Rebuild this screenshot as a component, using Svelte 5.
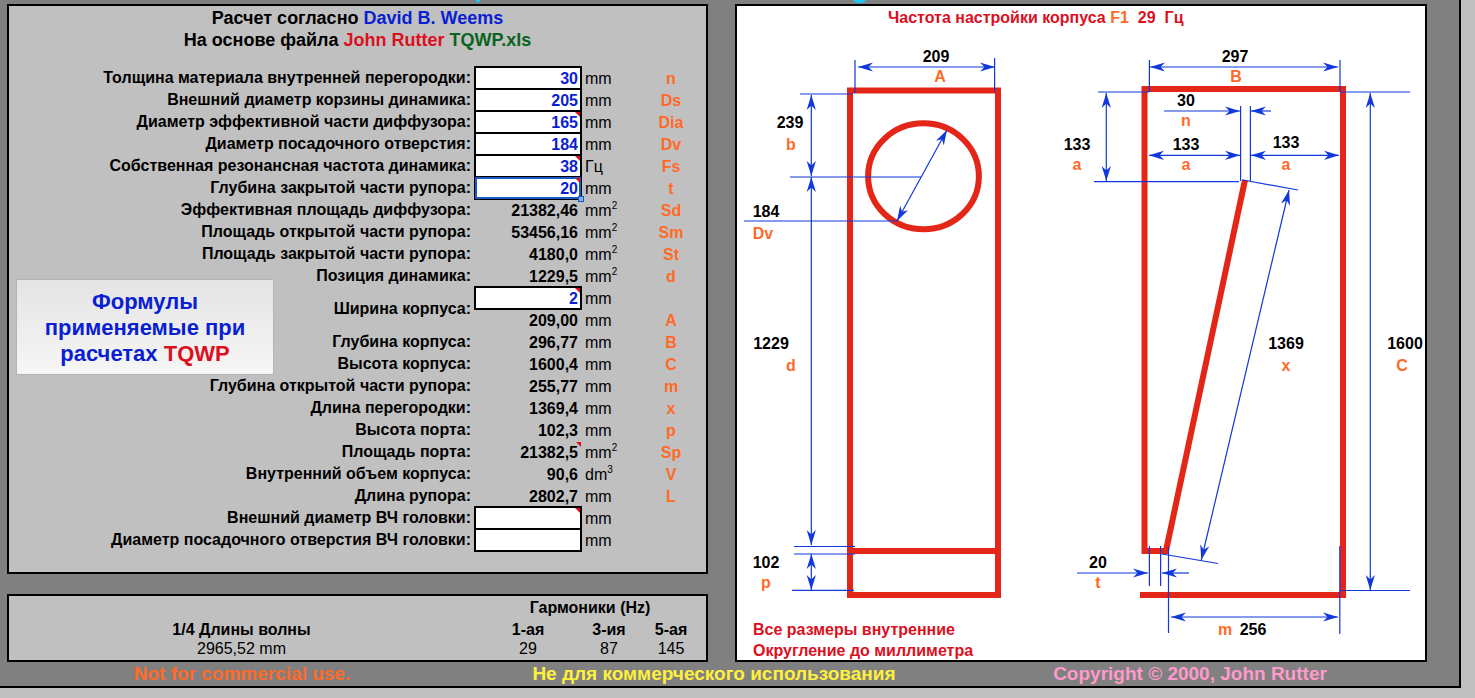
<script lang="ts">
  type Row = {
    id: string;
    label?: string;
    span?: number;
    value: string;
    unit: string;
    sup?: string;
    symbol?: string;
    input?: boolean;
    note?: boolean;
    selected?: boolean;
  };

  const rows: Row[] = $state([
    { id: 'n', label: 'Толщина материала внутренней перегородки:', value: '30', unit: 'mm', symbol: 'n', input: true },
    { id: 'ds', label: 'Внешний диаметр корзины динамика:', value: '205', unit: 'mm', symbol: 'Ds', input: true },
    { id: 'dia', label: 'Диаметр эффективной части диффузора:', value: '165', unit: 'mm', symbol: 'Dia', input: true, note: true },
    { id: 'dv', label: 'Диаметр посадочного отверстия:', value: '184', unit: 'mm', symbol: 'Dv', input: true },
    { id: 'fs', label: 'Собственная резонансная частота динамика:', value: '38', unit: 'Гц', symbol: 'Fs', input: true, note: true },
    { id: 't', label: 'Глубина закрытой части рупора:', value: '20', unit: 'mm', symbol: 't', input: true, note: true, selected: true },
    { id: 'sd', label: 'Эффективная площадь диффузора:', value: '21382,46', unit: 'mm', sup: '2', symbol: 'Sd' },
    { id: 'sm', label: 'Площадь открытой части рупора:', value: '53456,16', unit: 'mm', sup: '2', symbol: 'Sm' },
    { id: 'st', label: 'Площадь закрытой части рупора:', value: '4180,0', unit: 'mm', sup: '2', symbol: 'St' },
    { id: 'd', label: 'Позиция динамика:', value: '1229,5', unit: 'mm', sup: '2', symbol: 'd' },
    { id: 'width', label: 'Ширина корпуса:', span: 2, value: '2', unit: 'mm', input: true, note: true },
    { id: 'a', value: '209,00', unit: 'mm', symbol: 'A' },
    { id: 'b', label: 'Глубина корпуса:', value: '296,77', unit: 'mm', symbol: 'B' },
    { id: 'c', label: 'Высота корпуса:', value: '1600,4', unit: 'mm', symbol: 'C' },
    { id: 'm', label: 'Глубина открытой части рупора:', value: '255,77', unit: 'mm', symbol: 'm' },
    { id: 'x', label: 'Длина перегородки:', value: '1369,4', unit: 'mm', symbol: 'x' },
    { id: 'p', label: 'Высота порта:', value: '102,3', unit: 'mm', symbol: 'p' },
    { id: 'sp', label: 'Площадь порта:', value: '21382,5', unit: 'mm', sup: '2', symbol: 'Sp', note: true },
    { id: 'v', label: 'Внутренний объем корпуса:', value: '90,6', unit: 'dm', sup: '3', symbol: 'V' },
    { id: 'l', label: 'Длина рупора:', value: '2802,7', unit: 'mm', symbol: 'L' },
    { id: 'hf-outer', label: 'Внешний диаметр ВЧ головки:', value: '', unit: 'mm', input: true, note: true },
    { id: 'hf-hole', label: 'Диаметр посадочного отверстия ВЧ головки:', value: '', unit: 'mm', input: true },
  ]);

  // dimension lines with a head on both ends: x1, y1, x2, y2
  const spans = [
    [858, 67, 995, 67],
    [811.3, 95, 811.3, 176],
    [811.3, 177, 811.3, 545],
    [811.3, 554, 811.3, 590],
    [897, 221, 947, 130],
    [1150, 67, 1338, 67],
    [1106.3, 93, 1106.3, 181],
    [1149, 155.3, 1240, 155.3],
    [1251, 155.3, 1339, 155.3],
    [1289, 190, 1201.3, 560],
    [1370.3, 93, 1370.3, 590],
    [1171, 617, 1338, 617],
  ];

  // lines with a head on the second end only
  const pointers = [
    [1164, 111, 1240, 111],
    [1271, 111, 1251, 111],
    [1077, 573, 1148, 573],
    [1189, 573, 1162, 573],
  ];

  const guides = [
    [855, 60, 855, 93],
    [994.6, 58, 994.6, 92],
    [800, 94, 853, 94],
    [790, 177, 921, 177],
    [744, 221, 897, 221],
    [794, 546.5, 855, 546.5],
    [794, 554, 855, 554],
    [792, 590.4, 854, 590.4],
    [1149.4, 60, 1149.4, 92],
    [1340, 60, 1340, 92],
    [1098, 92, 1149, 92],
    [1340, 92, 1410, 92],
    [1094, 181.7, 1239, 181.7],
    [1240.6, 106, 1240.6, 181],
    [1250.4, 106, 1250.4, 181],
    [1243, 180, 1298, 190],
    [1162, 554, 1218, 563.5],
    [1149.4, 546, 1149.4, 586],
    [1160.6, 546, 1160.6, 586],
    [1168.5, 547, 1168.5, 633],
    [1339.8, 546, 1339.8, 634],
    [1340, 590.5, 1410, 590.5],
  ];

  const sizes: Array<[number, number, string]> = [
    [936, 62, '209'],
    [790, 128, '239'],
    [766, 217, '184'],
    [771, 349, '1229'],
    [766, 568, '102'],
    [1235, 62, '297'],
    [1186, 106, '30'],
    [1186, 150, '133'],
    [1286, 148, '133'],
    [1077, 150, '133'],
    [1286, 349, '1369'],
    [1405, 349, '1600'],
    [1098, 568, '20'],
    [1253, 635, '256'],
  ];

  const letters: Array<[number, number, string]> = [
    [940, 82, 'A'],
    [791, 150, 'b'],
    [763, 239, 'Dv'],
    [791, 371, 'd'],
    [766, 588, 'p'],
    [1236, 82, 'B'],
    [1186, 126, 'n'],
    [1186, 170, 'a'],
    [1286, 170, 'a'],
    [1077, 170, 'a'],
    [1286, 371, 'x'],
    [1402, 371, 'C'],
    [1098, 588, 't'],
    [1225, 635, 'm'],
  ];
</script>

<main class="sheet">
  <svg class="title-edge" viewBox="0 0 1459 4" preserveAspectRatio="none" aria-hidden="true">
    <path d="M476 0h4v2h-4zM853 0h13q-2 3-6.500 3t-6.500-3z" />
  </svg>

  <div class="panels">
    <div class="left">
      <section class="panel params">
        <h1>Расчет согласно <span class="blue">David B. Weems</span></h1>
        <h1>На основе файла <span class="red">John Rutter</span> <span class="green">TQWP.xls</span></h1>

        <table class="grid">
          <colgroup>
            <col />
            <col class="col-value" />
            <col class="col-unit" />
            <col class="col-symbol" />
          </colgroup>
          <tbody>
            {#each rows as row (row.id)}
              <tr>
                {#if row.label}
                  <th scope="row" rowspan={row.span ?? 1}>
                    {#if row.input}
                      <label for={row.id}>{row.label}</label>
                    {:else}
                      {row.label}
                    {/if}
                  </th>
                {/if}
                <td class="value" class:note={row.note} class:boxed={row.input} class:selected={row.selected}>
                  {#if row.input}
                    <input id={row.id} type="text" inputmode="decimal" bind:value={row.value} />
                  {:else}
                    {row.value}
                  {/if}
                </td>
                <td class="unit">{row.unit}{#if row.sup}<sup>{row.sup}</sup>{/if}</td>
                <td class="symbol">{row.symbol ?? ''}</td>
              </tr>
            {/each}
          </tbody>
        </table>

        <button class="formulas" type="button">
          <span>Формулы</span>
          <span>применяемые при</span>
          <span>расчетах <b class="red">TQWP</b></span>
        </button>
      </section>

      <section class="panel">
        <table class="grid harmonics">
          <colgroup>
            <col />
            <col class="col-value" />
            <col class="col-unit" />
            <col class="col-symbol" />
          </colgroup>
          <tbody>
            <tr>
              <td></td>
              <th colspan="3">Гармоники (Hz)</th>
            </tr>
            <tr>
              <th>1/4 Длины волны</th>
              <th>1-ая</th>
              <th>3-ия</th>
              <th>5-ая</th>
            </tr>
            <tr class="last">
              <td>2965,52 mm</td>
              <td>29</td>
              <td>87</td>
              <td>145</td>
            </tr>
          </tbody>
        </table>
      </section>
    </div>

    <section class="panel drawing">
      <h2>
        <span>Частота настройки корпуса <span class="orange">F1</span></span>
        <span>29</span>
        <span>Гц</span>
      </h2>
      <svg class="plan" viewBox="737 28 688 632" role="img" aria-label="Чертеж корпуса">
        <defs>
          <marker id="head" viewBox="-15 -5 15 10" refX="0" refY="0" markerWidth="15" markerHeight="10" markerUnits="userSpaceOnUse" orient="auto-start-reverse">
            <path d="M0 0L-15 -4.600L-10.500 0L-15 4.600Z" fill="#1038dc" />
          </marker>
        </defs>

        <g class="walls">
          <path d="M850 90.500H998V595H850ZM850 551H998" />
          <ellipse cx="923.500" cy="176.300" rx="55.400" ry="53" />
          <path d="M1245 180L1165.500 553" />
          <path d="M1168 551H1144.500V89H1343V595H1140" />
        </g>

        <g class="dims">
          {#each guides as [x1, y1, x2, y2]}
            <line {x1} {y1} {x2} {y2} />
          {/each}
          {#each pointers as [x1, y1, x2, y2]}
            <line {x1} {y1} {x2} {y2} marker-end="url(#head)" />
          {/each}
          {#each spans as [x1, y1, x2, y2]}
            <line {x1} {y1} {x2} {y2} marker-start="url(#head)" marker-end="url(#head)" />
          {/each}
        </g>

        {#each sizes as [x, y, text]}
          <text class="size" {x} {y}>{text}</text>
        {/each}
        {#each letters as [x, y, text]}
          <text class="letter" {x} {y}>{text}</text>
        {/each}
        <text class="remark" x="753" y="635">Все размеры внутренние</text>
        <text class="remark" x="753" y="656">Округление до миллиметра</text>
      </svg>
    </section>
  </div>

  <footer>
    <span class="orange">Not for commercial use.</span>
    <span class="yellow">Не для коммерческого использования</span>
    <span class="pink">Copyright © 2000, John Rutter</span>
  </footer>
</main>

<style>
:global(body) {
  margin: 0;
  background: #c0c0c0;
}

.sheet {
  margin: 0 14px 10px 0;
  background: #808080;
  border: solid #000;
  border-width: 0 2px 2px 0;
  color: #000;
  font-family: "Liberation Sans", Arial, sans-serif;
  font-size: 16px;
}

.title-edge {
  display: block;
  width: 100%;
  height: 4px;
  fill: #1cc8fa;
}

.panels {
  display: grid;
  grid-template-columns: minmax(0, 701fr) minmax(0, 692fr);
  gap: 27px;
  padding: 0 32px 0 7px;
}

.left {
  display: flex;
  flex-direction: column;
  gap: 20px;
}

.panel {
  background: #c0c0c0;
  border: 2px solid #000;
}

.params {
  position: relative;
  padding-bottom: 22px;
}

h1 {
  margin: 0;
  padding-top: 2px;
  font-size: 18px;
  line-height: 20px;
  text-align: center;
}

.blue { color: #0a1ed2; }
.red { color: #dc0f1e; }
.green { color: #0a6420; }
.orange { color: #ff6a28; }
.yellow { color: #fff03c; }
.pink { color: #ff9acb; }

.grid {
  width: 100%;
  table-layout: fixed;
  border-spacing: 0;
  line-height: 20px;
}

.params .grid { margin-top: 16px; }

.col-value { width: 108px; }
.col-unit { width: 54px; }
.col-symbol { width: 70px; }

.grid tr { height: 22px; }
.grid th,
.grid td {
  padding: 2px 0 0;
  white-space: nowrap;
}

.params .grid th {
  padding-right: 3px;
  text-align: right;
}

.params .grid td {
  padding-top: 4px;
  line-height: 18px;
}

.params .grid .value {
  position: relative;
  padding-right: 4px;
  font-weight: bold;
  text-align: right;
}

.params .grid .boxed { padding: 0; }
.params .grid .unit { padding-left: 3px; }

input {
  display: block;
  box-sizing: border-box;
  width: 100%;
  height: 24px;
  margin: 0 0 -2px;
  padding: 2px 2px 0;
  background: #fff;
  border: 2px solid #000;
  border-radius: 0;
  color: #0a1ed2;
  font: bold 16px "Liberation Sans", Arial, sans-serif;
  text-align: right;
}

.selected input {
  outline: 2px solid #1a58c8;
  outline-offset: -3px;
}

/* comment mark in the cell corner */
.note::before {
  content: '';
  position: absolute;
  top: 2px;
  right: 1px;
  width: 5px;
  height: 5px;
  background: #dc0f1e;
  clip-path: polygon(0 0, 100% 0, 100% 100%);
}

.boxed.note::before { right: 2px; }

/* fill handle */
.selected::after {
  content: '';
  position: absolute;
  right: -2px;
  bottom: -4px;
  z-index: 1;
  width: 4px;
  height: 4px;
  background: #78b4f0;
  border: 1px solid #1a58c8;
}

sup {
  font-size: 10px;
  line-height: 0;
  vertical-align: 7px;
}

.symbol {
  color: #ff6a28;
  font-weight: bold;
  text-align: center;
}

.formulas {
  position: absolute;
  top: 273px;
  left: 7px;
  width: 258px;
  height: 96px;
  padding: 2px 20px 0;
  background: linear-gradient(#e4e4e4, #f6f6f6);
  border: 1px solid #b4b4b4;
  color: #0a1ed2;
  font: bold 22px/26px "Liberation Sans", Arial, sans-serif;
  text-align: center;
}

.formulas span { display: block; }

.harmonics { text-align: center; }
.harmonics .last { height: 20px; }
.harmonics .last td {
  padding: 0;
  line-height: 18px;
  vertical-align: top;
}

.drawing { background: #fff; }

h2 {
  display: flex;
  gap: 9px;
  margin: 0;
  padding: 2px 0 0 151px;
  color: #dc0f1e;
  font-size: 16px;
  line-height: 20px;
  white-space: nowrap;
}

.plan {
  display: block;
  width: 100%;
}

.walls {
  fill: none;
  stroke: #e42618;
  stroke-width: 6;
}

.dims {
  stroke: #1038dc;
  stroke-width: 1.2;
}

.plan text {
  font-size: 16px;
  font-weight: bold;
}

.size,
.letter { text-anchor: middle; }
.letter { fill: #ff6a28; }
.remark { fill: #dc0f1e; }

footer {
  display: grid;
  grid-template-columns: 484fr 460fr 492fr 23fr;
  font-size: 19px;
  font-weight: bold;
  line-height: 24px;
  text-align: center;
  white-space: nowrap;
}
</style>
